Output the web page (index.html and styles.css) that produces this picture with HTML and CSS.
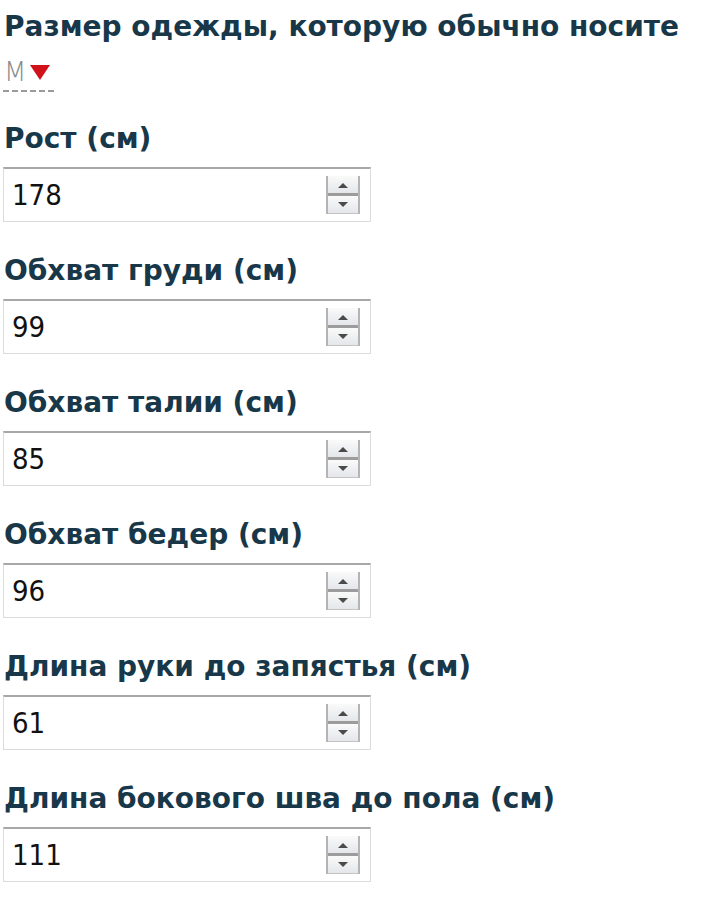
FILE: index.html
```html
<!DOCTYPE html>
<html lang="ru">

<head>
    <meta charset="UTF-8">
    <meta name="viewport" content="width=device-width, initial-scale=1.0">
    <title>Размеры</title>
    <link rel="stylesheet" href="styles.css">
</head>

<body>
    <div class="sizes-form">
        <div class="title">Размер одежды, которую обычно носите</div>
        <div class="size-row">
            <span class="size-select">M<span class="size-arrow"></span></span>
        </div>

        <!-- Рост -->
        <div class="field">
            <label for="height">Рост (см)</label>
            <div class="numbox">
                <input type="text" id="height" value="178">
                <div class="spin">
                    <span class="spin-btn up"></span>
                    <span class="spin-btn down"></span>
                </div>
            </div>
        </div>

        <!-- Обхват груди -->
        <div class="field">
            <label for="chest">Обхват груди (см)</label>
            <div class="numbox">
                <input type="text" id="chest" value="99">
                <div class="spin">
                    <span class="spin-btn up"></span>
                    <span class="spin-btn down"></span>
                </div>
            </div>
        </div>

        <!-- Обхват талии -->
        <div class="field">
            <label for="waist">Обхват талии (см)</label>
            <div class="numbox">
                <input type="text" id="waist" value="85">
                <div class="spin">
                    <span class="spin-btn up"></span>
                    <span class="spin-btn down"></span>
                </div>
            </div>
        </div>

        <!-- Обхват бедер -->
        <div class="field">
            <label for="hips">Обхват бедер (см)</label>
            <div class="numbox">
                <input type="text" id="hips" value="96">
                <div class="spin">
                    <span class="spin-btn up"></span>
                    <span class="spin-btn down"></span>
                </div>
            </div>
        </div>

        <!-- Длина руки -->
        <div class="field">
            <label for="arm">Длина руки до запястья (см)</label>
            <div class="numbox">
                <input type="text" id="arm" value="61">
                <div class="spin">
                    <span class="spin-btn up"></span>
                    <span class="spin-btn down"></span>
                </div>
            </div>
        </div>

        <!-- Длина бокового шва -->
        <div class="field">
            <label for="leg">Длина бокового шва до пола (см)</label>
            <div class="numbox">
                <input type="text" id="leg" value="111">
                <div class="spin">
                    <span class="spin-btn up"></span>
                    <span class="spin-btn down"></span>
                </div>
            </div>
        </div>
    </div>
</body>

</html>
```

FILE: styles.css
```css
body {
    margin: 0;
    background-color: #fff;
    font-family: "DejaVu Sans", Verdana, sans-serif;
}

.sizes-form {
    padding: 9px 0 0 4px;
}

.title,
label {
    display: block;
    font-size: 28px;
    font-weight: bold;
    line-height: 36px;
    height: 36px;
    color: #18384a;
    white-space: nowrap;
}

.size-row {
    margin-top: 9px;
    height: 37px;
    line-height: 36px;
}

.size-select {
    display: inline-block;
    font-family: "DejaVu Sans", sans-serif;
    font-weight: 200;
    font-size: 26px;
    color: #8a8a8a;
    border-bottom: 2px dashed #9a9a9a;
    padding: 0 4px 0 1px;
    margin-left: -1px;
}

.size-arrow {
    display: inline-block;
    margin-left: 4px;
    vertical-align: 1px;
    border-left: 10px solid transparent;
    border-right: 10px solid transparent;
    border-top: 15px solid #d0121b;
}

.field {
    margin-top: 30px;
}

.field + .field {
    margin-top: 31px;
}

.numbox {
    display: flex;
    align-items: center;
    width: 366px;
    height: 52px;
    margin-top: 10px;
    margin-left: -1px;
    border: 1px solid #dcdcdc;
    border-top: 2px solid #a8a8a8;
    background-color: #fff;
}

.numbox input {
    flex: 1;
    min-width: 0;
    border: none;
    outline: none;
    padding: 0 0 0 8px;
    font-family: "DejaVu Sans Condensed", "DejaVu Sans", sans-serif;
    font-stretch: condensed;
    font-size: 29px;
    color: #111;
    background: transparent;
}

.spin {
    display: flex;
    flex-direction: column;
    width: 34px;
    height: 38px;
    margin-right: 10px;
    border-left: 2px solid #b4b4b4;
    border-right: 2px solid #b4b4b4;
    box-sizing: border-box;
}

.spin-btn {
    flex: 1;
    position: relative;
    background: linear-gradient(#fafafa, #e4e6ea);
}

.spin-btn.up {
    border-bottom: 3px solid #9c9c9c;
}

.spin-btn.down {
    border-bottom: 1px solid #c4c4c4;
}

.spin-btn::after {
    content: "";
    position: absolute;
    left: 50%;
    top: 50%;
    margin-left: -5px;
    border-left: 5px solid transparent;
    border-right: 5px solid transparent;
}

.spin-btn.up::after {
    margin-top: -2px;
    border-bottom: 5px solid #4a4a4a;
}

.spin-btn.down::after {
    margin-top: -3px;
    border-top: 5px solid #4a4a4a;
}
```
